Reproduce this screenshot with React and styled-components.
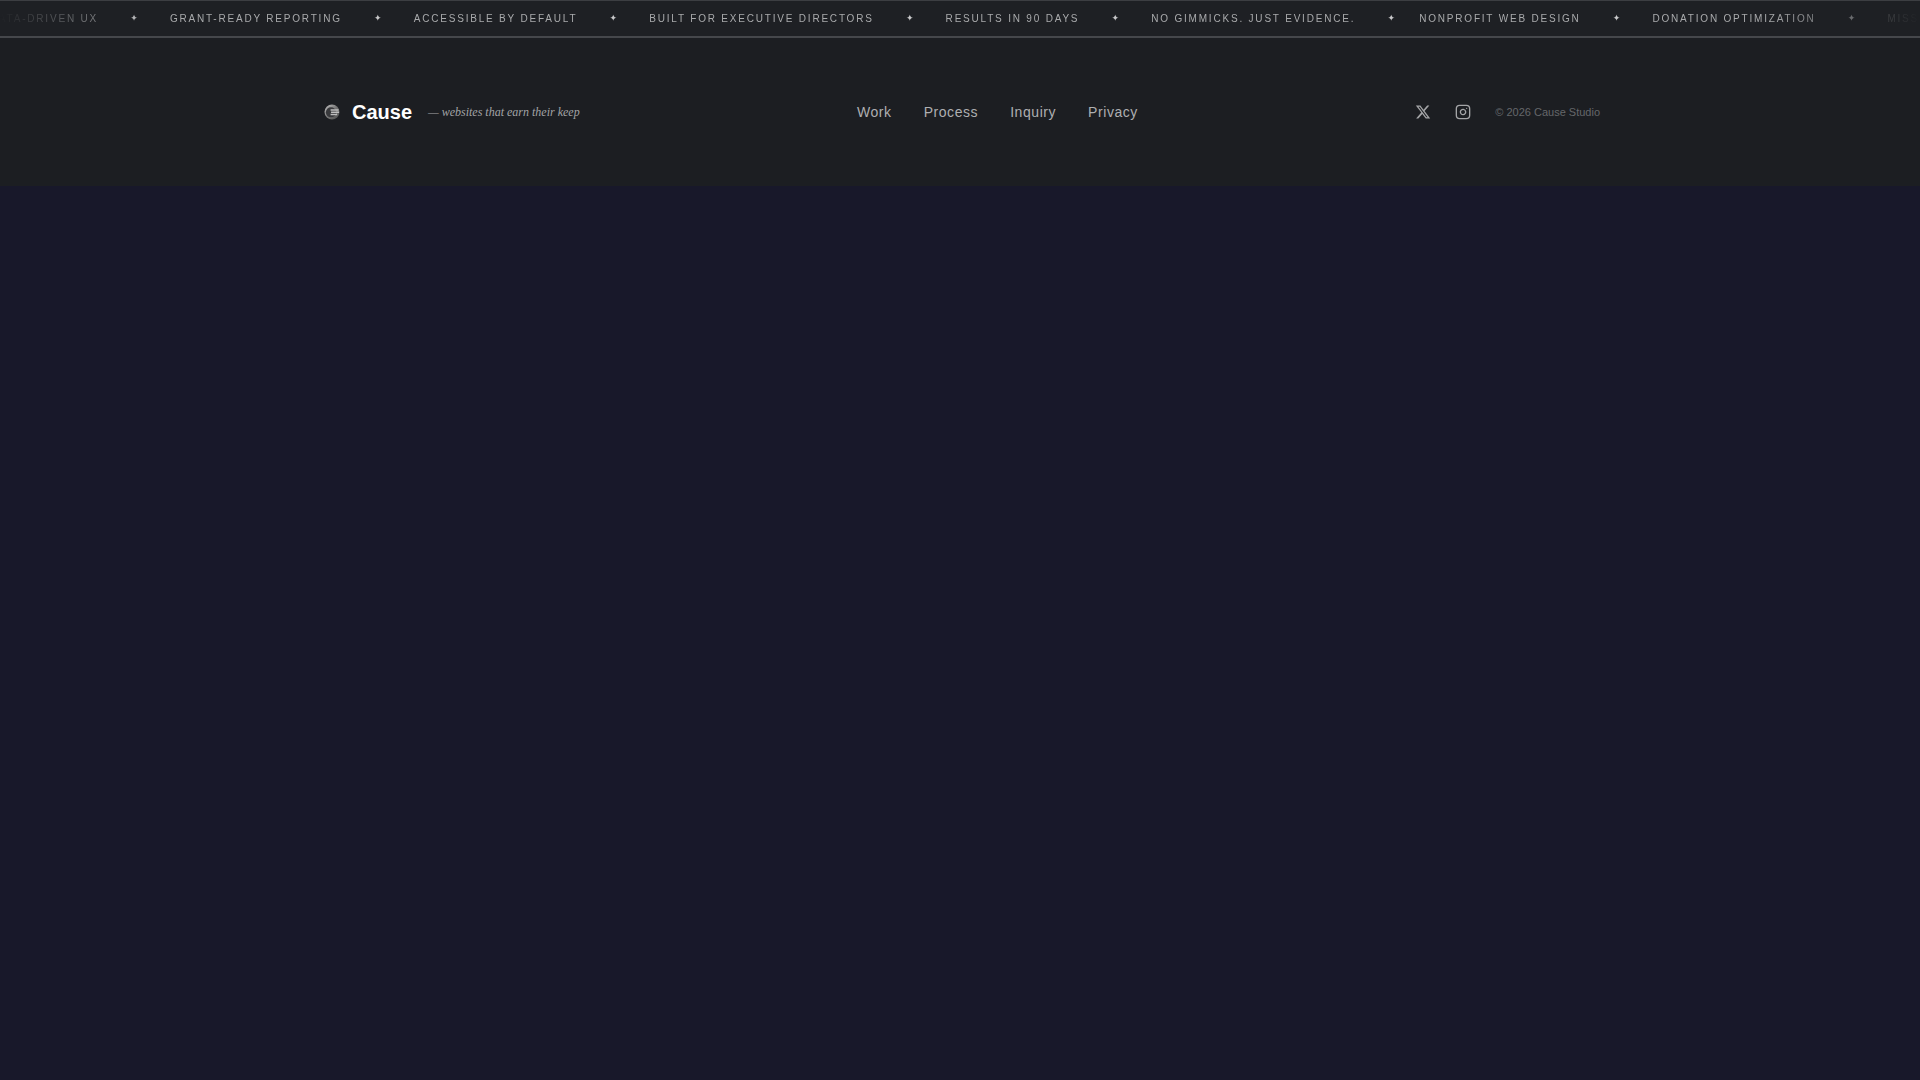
import React from "react";
import styled, { createGlobalStyle } from "styled-components";

const Global = createGlobalStyle`
  html, body { margin: 0; padding: 0; background: #18182a; min-height: 100vh; }
  #root { min-height: 100vh; display: flex; flex-direction: column; }
`;

const Ticker = styled.div`
  height: 35px;
  flex: none;
  background: #1e2024;
  border-top: 1px solid #3c3e42;
  border-bottom: 2px solid #45474b;
  overflow: hidden;
  display: flex;
  align-items: center;
`;

const Fade = styled.div`
  width: 100%;
  overflow: hidden;
  mask-image: linear-gradient(to right, transparent 0, #000 8%, #000 92%, transparent 100%);
`;

const Track = styled.div`
  display: flex;
  align-items: center;
  gap: 32.2px;
  white-space: nowrap;
  width: max-content;
  transform: translateX(-10.2px);
`;

const TickerItem = styled.span`
  font: 400 10px/1 "Liberation Sans", Arial, sans-serif;
  letter-spacing: 1.8px;
  text-transform: uppercase;
  color: #a9aaac;
  margin-left: ${(p) => (p.$seam ? "-8px" : "0")};
`;

const Star = styled.span`
  font: 400 9px/1 "DejaVu Sans", sans-serif;
  color: #c8c8ca;
`;

const Footer = styled.footer`
  flex: none;
  height: 148px;
  background: #1c1e22;
  display: flex;
  justify-content: center;
  align-items: center;
`;

const Inner = styled.div`
  width: 1280px;
  display: flex;
  justify-content: space-between;
  align-items: center;
`;

const Brand = styled.div`
  display: flex;
  align-items: center;
  padding-left: 4px;
`;

const Logo = styled.svg`
  width: 16px;
  height: 16px;
  margin-right: 12px;
  flex: none;
`;

const Name = styled.span`
  font: 700 20px/1 "Liberation Sans", Arial, sans-serif;
  color: #ffffff;
  margin-right: 16px;
`;

const Tagline = styled.span`
  font: italic 400 12px/1 "Liberation Serif", "Times New Roman", serif;
  color: #a3a4a6;
`;

const Nav = styled.nav`
  display: flex;
  gap: 32px;
`;

const NavLink = styled.a`
  font: 400 14px/1 "Liberation Sans", Arial, sans-serif;
  letter-spacing: 0.56px;
  color: #aeafb1;
`;

const Right = styled.div`
  display: flex;
  align-items: center;
  gap: 24px;
`;

const Icon = styled.svg`
  width: 16px;
  height: 16px;
  display: block;
  color: #a4a5a7;
`;

const Copy = styled.span`
  font: 400 11px/1 "Liberation Sans", Arial, sans-serif;
  color: #65676a;
`;

const items = [
  "Data-Driven UX",
  "Grant-Ready Reporting",
  "Accessible by Default",
  "Built for Executive Directors",
  "Results in 90 Days",
  "No Gimmicks. Just Evidence.",
  "Nonprofit Web Design",
  "Donation Optimization",
  "Mission-First Strategy",
];

export default function App() {
  return (
    <>
      <Global />
      <Ticker>
        <Fade>
          <Track>
            {items.map((t) => (
              <React.Fragment key={t}>
                <TickerItem $seam={t === "Nonprofit Web Design"}>{t}</TickerItem>
                <Star>✦</Star>
              </React.Fragment>
            ))}
          </Track>
        </Fade>
      </Ticker>
      <Footer>
        <Inner>
          <Brand>
            <Logo viewBox="0 0 17 17" aria-hidden="true">
              <defs>
                <linearGradient id="g" x1="0" y1="0" x2="1" y2="1">
                  <stop offset="0" stopColor="#c4c4c4" />
                  <stop offset="0.5" stopColor="#757575" />
                  <stop offset="1" stopColor="#4a4a4a" />
                </linearGradient>
              </defs>
              <circle cx="8.5" cy="8.5" r="8" fill="url(#g)" />
              <circle cx="7.4" cy="8.8" r="5.4" fill="#38393c" />
              <path d="M7 6.4h8.5M7.5 8.8h8.5M7 11.2h7" fill="none" stroke="#bdbdbd" strokeWidth="1.5" />
            </Logo>
            <Name>Cause</Name>
            <Tagline>— websites that earn their keep</Tagline>
          </Brand>
          <Nav>
            <NavLink>Work</NavLink>
            <NavLink>Process</NavLink>
            <NavLink>Inquiry</NavLink>
            <NavLink>Privacy</NavLink>
          </Nav>
          <Right>
            <Icon viewBox="0 0 24 24" fill="currentColor" aria-hidden="true">
              <path d="M18.244 2.25h3.308l-7.227 8.26 8.502 11.24H16.17l-5.214-6.817L4.99 21.75H1.68l7.73-8.835L1.254 2.25H8.08l4.713 6.231zm-1.161 17.52h1.833L7.084 4.126H5.117z" />
            </Icon>
            <Icon viewBox="0 0 24 24" fill="none" stroke="currentColor" strokeWidth="2" strokeLinecap="round" strokeLinejoin="round" aria-hidden="true">
              <rect x="2" y="2" width="20" height="20" rx="5" ry="5" />
              <path d="M16 11.37A4 4 0 1 1 12.63 8 4 4 0 0 1 16 11.37z" />
              <line x1="17.5" y1="6.5" x2="17.51" y2="6.5" />
            </Icon>
            <Copy>© 2026 Cause Studio</Copy>
          </Right>
        </Inner>
      </Footer>
    </>
  );
}
